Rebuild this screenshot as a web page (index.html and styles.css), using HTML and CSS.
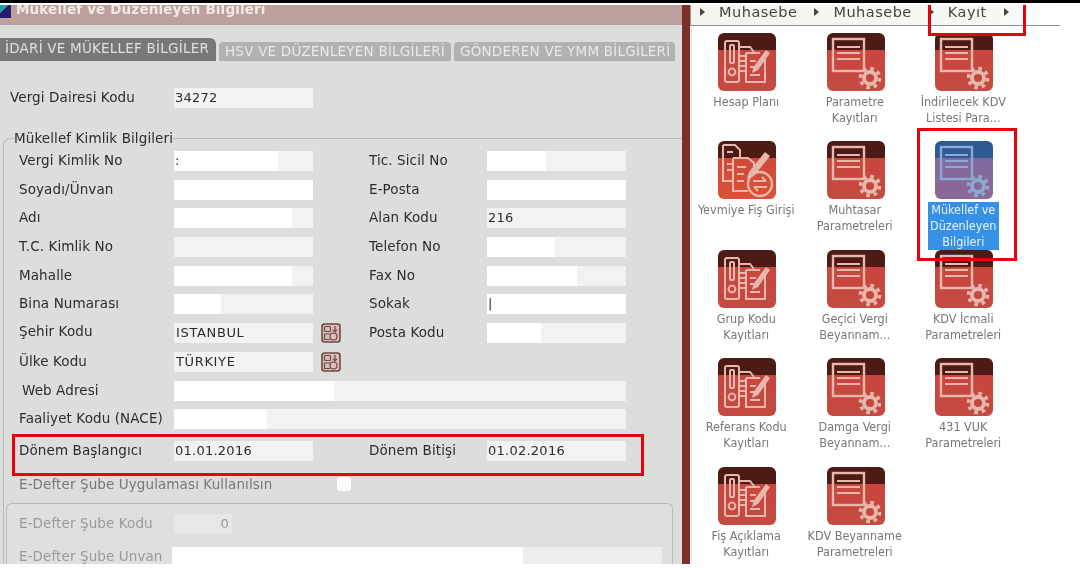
FILE: index.html
```html
<!DOCTYPE html>
<html lang="tr">
<head>
<meta charset="utf-8">
<title>Mükellef ve Düzenleyen Bilgileri</title>
<link rel="stylesheet" href="styles.css">
</head>
<body>
<svg class="defs" width="0" height="0" aria-hidden="true">
  <symbol id="gear" viewBox="0 0 58 58">
    <circle cx="43" cy="45" r="9.5" fill="none" stroke="currentColor" stroke-width="3.6" stroke-dasharray="3.6 3.86"/>
    <circle cx="43" cy="45" r="6" fill="none" stroke="currentColor" stroke-width="3.8"/>
  </symbol>
  <symbol id="doc" viewBox="0 0 58 58">
    <g fill="none" stroke="currentColor">
      <rect x="6" y="6" width="31" height="32" stroke-width="2.4"/>
      <path d="M10 14H33M10 20H33M10 26H33" stroke-width="2"/>
    </g>
    <use href="#gear"/>
  </symbol>
  <symbol id="book" viewBox="0 0 58 58">
    <g fill="none" stroke="currentColor" stroke-width="2">
      <rect x="7" y="8" width="14" height="41" rx="2"/>
      <rect x="12" y="12" width="4" height="18" rx="1"/>
      <circle cx="14" cy="39" r="3.4"/>
      <path d="M21 14H32L36 19M21 23H28M21 28H28M21 33H28M21 38H28"/>
      <path d="M28 20H42M47 26V49H28V20"/>
      <path d="M32 28H38M32 34H36M32 42H42"/>
    </g>
    <path d="M48 17L52 20L40 37L34 40L35.500 34Z" fill="currentColor"/>
  </symbol>
  <symbol id="swap" viewBox="0 0 58 58">
    <g fill="none" stroke="currentColor" stroke-width="2">
      <path d="M5 4H17L22 9V17M5 4V40H15"/>
      <path d="M15 17H30L36 22V33M15 17V50H30"/>
      <path d="M9 11H15M9 23H15M9 29H15M19 26H28M19 33H26M19 40H26"/>
      <circle cx="42" cy="43" r="12" stroke-width="2.4"/>
      <path d="M35 40H48M44 36L48 40M49 46H36M40 50L36 46" stroke-width="2"/>
    </g>
    <path d="M47 11L52 15L36 35L29 38L31 31Z" fill="currentColor"/>
  </symbol>
  <symbol id="lookup" viewBox="0 0 20 20">
    <rect x="1" y="1" width="18" height="18" rx="2.500" fill="#dcbcb6" stroke="#6d4b46" stroke-width="1.600"/>
    <g fill="none" stroke="#6d4b46" stroke-width="1.200">
      <rect x="3.500" y="3.500" width="6" height="5" rx="1"/>
      <circle cx="12.500" cy="13.500" r="3.500"/>
      <path d="M14 3V8.500M12 6.800L14 8.800L16 6.800M3.500 11H9M3.500 11V16.500H9"/>
    </g>
  </symbol>
</svg>

<div class="topline"></div>
<main class="app">
  <section class="form-panel">
    <header class="title">
      <span class="title-icon"></span>
      <h1 class="title-text">Mükellef ve Düzenleyen Bilgileri</h1>
    </header>

    <nav class="tabs">
      <a class="tab tab-active">İDARİ VE MÜKELLEF BİLGİLER</a>
      <a class="tab tab-hsv">HSV VE DÜZENLEYEN BİLGİLERİ</a>
      <a class="tab tab-gon">GÖNDEREN VE YMM BİLGİLERİ</a>
    </nav>

    <div class="row row-office">
      <label class="lbl">Vergi Dairesi Kodu</label>
      <div class="field">34272</div>
    </div>

    <fieldset class="identity">
      <legend class="legend">Mükellef Kimlik Bilgileri</legend>
      <div class="row">
        <label class="lbl">Vergi Kimlik No</label>
        <div class="field mask-a">:</div>
        <span></span>
        <label class="lbl">Tic. Sicil No</label>
        <div class="field mask-b"></div>
      </div>
      <div class="row">
        <label class="lbl">Soyadı/Ünvan</label>
        <div class="field mask-full"></div>
        <span></span>
        <label class="lbl">E-Posta</label>
        <div class="field mask-full"></div>
      </div>
      <div class="row">
        <label class="lbl">Adı</label>
        <div class="field mask-c"></div>
        <span></span>
        <label class="lbl">Alan Kodu</label>
        <div class="field">216</div>
      </div>
      <div class="row">
        <label class="lbl">T.C. Kimlik No</label>
        <div class="field"></div>
        <span></span>
        <label class="lbl">Telefon No</label>
        <div class="field mask-d"></div>
      </div>
      <div class="row">
        <label class="lbl">Mahalle</label>
        <div class="field mask-c"></div>
        <span></span>
        <label class="lbl">Fax No</label>
        <div class="field mask-e"></div>
      </div>
      <div class="row">
        <label class="lbl">Bina Numarası</label>
        <div class="field mask-g"></div>
        <span></span>
        <label class="lbl">Sokak</label>
        <div class="field mask-full">|</div>
      </div>
      <div class="row">
        <label class="lbl lbl-up">Şehir Kodu</label>
        <div class="field field-caps">ISTANBUL</div>
        <span class="lookup"><svg width="20" height="20"><use href="#lookup"/></svg></span>
        <label class="lbl">Posta Kodu</label>
        <div class="field mask-f"></div>
      </div>
      <div class="row">
        <label class="lbl">Ülke Kodu</label>
        <div class="field field-caps">TÜRKIYE</div>
        <span class="lookup"><svg width="20" height="20"><use href="#lookup"/></svg></span>
      </div>
      <div class="row">
        <label class="lbl lbl-in">Web Adresi</label>
        <div class="field field-wide mask-web"></div>
      </div>
      <div class="row">
        <label class="lbl">Faaliyet Kodu (NACE)</label>
        <div class="field field-wide mask-nace"></div>
      </div>
      <div class="row row-period">
        <label class="lbl">Dönem Başlangıcı</label>
        <div class="field">01.01.2016</div>
        <span></span>
        <label class="lbl">Dönem Bitişi</label>
        <div class="field">01.02.2016</div>
      </div>
      <div class="row row-check">
        <label class="lbl lbl-dim">E-Defter Şube Uygulaması Kullanılsın</label>
        <span class="check"></span>
      </div>
      <fieldset class="branch">
        <div class="row row-branch">
          <label class="lbl lbl-dim2">E-Defter Şube Kodu</label>
          <div class="field field-code">0</div>
        </div>
        <div class="row row-branch">
          <label class="lbl lbl-dim2">E-Defter Şube Unvan</label>
          <div class="field field-unvan"></div>
        </div>
      </fieldset>
    </fieldset>
    <div class="mark mark-period"></div>
  </section>

  <div class="divider"></div>

  <section class="menu-panel">
    <nav class="crumbs">
      <i class="tri"></i><span class="crumb">Muhasebe</span>
      <i class="tri"></i><span class="crumb">Muhasebe</span>
      <i class="tri"></i><span class="crumb">Kayıt</span>
      <i class="tri"></i>
    </nav>
    <div class="grid">
      <a class="item"><span class="tile"><svg width="58" height="58"><use href="#book"/></svg></span><span class="cap">Hesap Planı</span></a>
      <a class="item"><span class="tile"><svg width="58" height="58"><use href="#doc"/></svg></span><span class="cap">Parametre<br>Kayıtları</span></a>
      <a class="item"><span class="tile"><svg width="58" height="58"><use href="#doc"/></svg></span><span class="cap">İndirilecek KDV<br>Listesi Para...</span></a>

      <a class="item"><span class="tile tile-hot"><svg width="58" height="58"><use href="#swap"/></svg></span><span class="cap">Yevmiye Fiş Girişi</span></a>
      <a class="item"><span class="tile"><svg width="58" height="58"><use href="#doc"/></svg></span><span class="cap">Muhtasar<br>Parametreleri</span></a>
      <a class="item item-selected"><span class="tile tile-blue"><svg width="58" height="58"><use href="#doc"/></svg></span><span class="cap">Mükellef ve<br>Düzenleyen<br>Bilgileri</span></a>

      <a class="item"><span class="tile"><svg width="58" height="58"><use href="#book"/></svg></span><span class="cap">Grup Kodu<br>Kayıtları</span></a>
      <a class="item"><span class="tile"><svg width="58" height="58"><use href="#doc"/></svg></span><span class="cap">Geçici Vergi<br>Beyannam...</span></a>
      <a class="item"><span class="tile"><svg width="58" height="58"><use href="#doc"/></svg></span><span class="cap">KDV İcmali<br>Parametreleri</span></a>

      <a class="item"><span class="tile"><svg width="58" height="58"><use href="#book"/></svg></span><span class="cap">Referans Kodu<br>Kayıtları</span></a>
      <a class="item"><span class="tile"><svg width="58" height="58"><use href="#doc"/></svg></span><span class="cap">Damga Vergi<br>Beyannam...</span></a>
      <a class="item"><span class="tile"><svg width="58" height="58"><use href="#doc"/></svg></span><span class="cap">431 VUK<br>Parametreleri</span></a>

      <a class="item"><span class="tile"><svg width="58" height="58"><use href="#book"/></svg></span><span class="cap">Fiş Açıklama<br>Kayıtları</span></a>
      <a class="item"><span class="tile"><svg width="58" height="58"><use href="#doc"/></svg></span><span class="cap">KDV Beyanname<br>Parametreleri</span></a>
    </div>
    <div class="mark mark-crumb"></div>
    <div class="mark mark-item"></div>
  </section>
</main>
</body>
</html>
```

FILE: styles.css
```css
* { box-sizing: border-box; }
html, body { margin: 0; padding: 0; height: 569px; overflow: hidden; background: #fff; }
body { font-family: "DejaVu Sans", sans-serif; font-size: 13.5px; color: #2c2c2c; }
.defs { position: absolute; }

.topline { height: 2.5px; background: #000; margin-bottom: 2px; }
.app { display: flex; height: 559px; overflow: hidden; position: relative; filter: blur(0.35px); }

/* form side */
.form-panel { width: 682px; flex: none; background: #dcdedb; position: relative; overflow: hidden; }
.title { height: 20px; background: #bd9f9c; display: flex; overflow: hidden; }
.title-icon { width: 11px; height: 13px; background: linear-gradient(135deg, #1f9aa8 0 35%, #2a1a70 35%); flex: none; }
.title-text { margin: -5px 0 0 5px; font-size: 13.5px; line-height: 18px; font-weight: bold; color: #f1e9e7; letter-spacing: 0.15px; white-space: nowrap; }

.tabs { display: flex; align-items: flex-end; gap: 3px; margin-top: 13.5px; height: 23px; }
.tab { height: 19px; line-height: 18px; background: #b2b3b1; color: #e9e9e7; border-radius: 4px 4px 0 0; font-size: 13.5px; padding-left: 6px; white-space: nowrap; letter-spacing: 0.22px; }
.tab-active { width: 216px; height: 23px; line-height: 21px; padding-left: 5px; background: #777977; color: #dfe0de; border-radius: 0 6px 0 0; }
.tab-hsv { width: 232px; }
.tab-gon { width: 221px; }

.row { display: grid; grid-template-columns: 155px 139px 56px 118px 139px; height: 20px; margin-bottom: 8.7px; align-items: center; }
.row-office { padding-left: 10px; grid-template-columns: 164px 139px; margin-top: 27px; margin-bottom: 0; }
.lbl { letter-spacing: 0.1px; white-space: nowrap; margin-bottom: 2px; }
.lbl-up { margin-top: -3px; }
.lbl-in { padding-left: 3px; }
.lbl-dim { color: #777; }
.lbl-dim2 { color: #999; }

.field { height: 20px; line-height: 19px; background: #f2f3f1; font-size: 13px; padding-left: 1px; letter-spacing: 0.25px; white-space: nowrap; overflow: hidden; }
.field-caps { letter-spacing: 0.65px; padding-left: 2px; }
.field-wide { grid-column: 2 / span 4; }
.mask-full { background: #fff; }
.mask-a { background: linear-gradient(90deg, #fff 104px, #f2f3f1 104px); }
.mask-b { background: linear-gradient(90deg, #fff 59px, #f2f3f1 59px); }
.mask-c { background: linear-gradient(90deg, #fff 85%, #f2f3f1 85%); }
.mask-d { background: linear-gradient(90deg, #fff 68px, #f2f3f1 68px); }
.mask-e { background: linear-gradient(90deg, #fff 90px, #f2f3f1 90px); }
.mask-f { background: linear-gradient(90deg, #fff 54px, #f2f3f1 54px); }
.mask-g { background: linear-gradient(90deg, #fff 47px, #f2f3f1 47px); }
.mask-web { background: linear-gradient(90deg, #fff 160px, #f2f3f1 160px); }
.mask-nace { background: linear-gradient(90deg, #fff 93px, #f2f3f1 93px); }

.identity { margin: 22px -20px 0 3px; padding: 5px 0 0 15px; border: 1px solid #b9bab8; border-bottom: 0; border-radius: 7px 0 0 0; height: 500px; min-width: 0; }
.legend { margin-left: -5px; padding: 0; letter-spacing: 0.1px; font-size: 13.5px; line-height: 16px; }

.lookup { display: block; height: 20px; margin-left: 8px; }
.lookup svg { display: block; }

.row-period { margin-top: 12px; margin-bottom: 14px; }
.row-check { grid-template-columns: 318px 14px; height: 20px; margin-bottom: 8px; }
.check { width: 14px; height: 14px; border-radius: 3px; background: #fbfbfb; margin-top: -2px; }

.branch { margin: 0 0 0 -13px; width: 667px; padding: 10px 0 0 12px; background: #dfe0de; border: 1px solid #b9bab8; border-bottom: 0; border-radius: 6px 6px 0 0; height: 100px; min-width: 0; }
.row-branch { margin-bottom: 13px; grid-template-columns: 155px 58px; }
.row-branch:last-child { grid-template-columns: 153px 490px; }
.field-code { background: #e7e8e6; color: #999; text-align: right; padding-right: 3px; }
.field-unvan { background: linear-gradient(90deg, #fff 351px, #eceded 351px); }

.mark { position: absolute; border: 3px solid #e9000f; pointer-events: none; }
.mark-period { left: 12px; top: 429.5px; width: 632px; height: 42px; }
.mark-crumb { left: 238px; top: -6px; width: 98px; height: 37px; border-top: 0; }
.mark-item { left: 227px; top: 123.5px; width: 100px; height: 133px; }

/* divider */
.divider { width: 8px; flex: none; background: #7b2f28; }

/* menu side */
.menu-panel { flex: 1; background: #fff; position: relative; }
.crumbs { width: 370px; height: 21px; padding: 0 0 5px 9px; display: flex; align-items: center; gap: 14px; background: linear-gradient(90deg, #f4f4ef, #f7f7f3 80%, #fff); border-bottom: 1px solid #8f8f8f; border-left: 1px solid #a89a98; font-size: 14.5px; color: #444; letter-spacing: 0.5px; }
.crumb { margin-right: 3px; line-height: 16px; }
.tri { width: 0; height: 0; border-left: 5px solid #444; border-top: 4px solid transparent; border-bottom: 4px solid transparent; }

.grid { display: grid; grid-template-columns: repeat(3, 108.5px); grid-auto-rows: 108.5px; padding: 7px 0 0 1px; width: 330px; border-left: 1px solid #ecdcda; margin-left: 1px; height: 540px; }
.item { display: flex; flex-direction: column; align-items: center; }
.tile { width: 58px; height: 58px; flex: none; border-radius: 6px; display: block; color: #e8b8ac; background: linear-gradient(#4c1b15 0 17px, #c9463e 17px, #c44a42); }
.tile svg { display: block; }
.tile-hot { background: linear-gradient(#4c1b15 0 17px, #cf4a39 17px, #dc5036); }
.tile-blue { color: #8da9d2; background: linear-gradient(#2d5a92 0 17px, #7f6aa0 17px, #8d6896); }
.cap { margin: 3px 2px 0 0; text-align: center; font-family: "DejaVu Sans Condensed", "DejaVu Sans", sans-serif; font-stretch: condensed; font-size: 12.5px; line-height: 16px; color: #777; white-space: nowrap; }
.item-selected { position: relative; z-index: 1; }
.item-selected .cap { background: #3690e6; color: #eaf3fd; width: 71px; line-height: 16.3px; margin-top: 2.500px; }
```
